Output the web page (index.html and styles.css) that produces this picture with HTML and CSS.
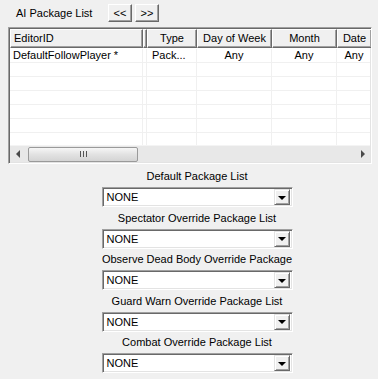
FILE: index.html
```html
<!DOCTYPE html>
<html>

<head>
    <meta charset="UTF-8">
    <title>AI Packages</title>
    <link rel="stylesheet" href="styles.css">
</head>

<body>

    <!-- =========== Package list =========== -->
    <div class="toolbar">
        <span class="caption">AI Package List</span>
        <button class="navButton">&lt;&lt;</button>
        <button class="navButton">&gt;&gt;</button>
    </div>

    <div class="listView">
        <div class="header">
            <div class="col colId">EditorID</div>
            <div class="col colGap"></div>
            <div class="col colType">Type</div>
            <div class="col colDay">Day of Week</div>
            <div class="col colMonth">Month</div>
            <div class="col colDate">Date</div>
        </div>

        <div class="rows">
            <div class="row">
                <div class="cell colId">DefaultFollowPlayer *</div>
                <div class="cell colGap"></div>
                <div class="cell colType left">Pack...</div>
                <div class="cell colDay">Any</div>
                <div class="cell colMonth">Any</div>
                <div class="cell colDate">Any</div>
            </div>
            <div class="row"><div class="cell colId"></div><div class="cell colGap"></div><div class="cell colType"></div><div class="cell colDay"></div><div class="cell colMonth"></div><div class="cell colDate"></div></div>
            <div class="row"><div class="cell colId"></div><div class="cell colGap"></div><div class="cell colType"></div><div class="cell colDay"></div><div class="cell colMonth"></div><div class="cell colDate"></div></div>
            <div class="row"><div class="cell colId"></div><div class="cell colGap"></div><div class="cell colType"></div><div class="cell colDay"></div><div class="cell colMonth"></div><div class="cell colDate"></div></div>
            <div class="row"><div class="cell colId"></div><div class="cell colGap"></div><div class="cell colType"></div><div class="cell colDay"></div><div class="cell colMonth"></div><div class="cell colDate"></div></div>
            <div class="row"><div class="cell colId"></div><div class="cell colGap"></div><div class="cell colType"></div><div class="cell colDay"></div><div class="cell colMonth"></div><div class="cell colDate"></div></div>
            <div class="row"><div class="cell colId"></div><div class="cell colGap"></div><div class="cell colType"></div><div class="cell colDay"></div><div class="cell colMonth"></div><div class="cell colDate"></div></div>
        </div>

        <!-- horizontal scrollbar -->
        <div class="hScroll">
            <span class="arrowLeft"></span>
            <div class="thumb"><span class="grip"></span></div>
            <span class="arrowRight"></span>
        </div>
    </div>

    <!-- =========== Override lists =========== -->
    <div class="packages">
        <div class="group">
            <span class="label">Default Package List</span>
            <div class="combo"><span class="value">NONE</span><span class="dropButton"></span></div>
        </div>
        <div class="group">
            <span class="label">Spectator Override Package List</span>
            <div class="combo"><span class="value">NONE</span><span class="dropButton"></span></div>
        </div>
        <div class="group">
            <span class="label">Observe Dead Body Override Package</span>
            <div class="combo"><span class="value">NONE</span><span class="dropButton"></span></div>
        </div>
        <div class="group">
            <span class="label">Guard Warn Override Package List</span>
            <div class="combo"><span class="value">NONE</span><span class="dropButton"></span></div>
        </div>
        <div class="group">
            <span class="label">Combat Override Package List</span>
            <div class="combo"><span class="value">NONE</span><span class="dropButton"></span></div>
        </div>
    </div>

</body>

</html>
```

FILE: styles.css
```css
* {
    margin: 0;
    padding: 0;
    box-sizing: border-box;
}

:root {
    --face: #f0f0f0;
    --white: #fff;
    --light: #e3e3e3;
    --shadow: #a0a0a0;
    --dark: #696969;
    --grid: #f0f0f0;
}

body {
    width: 378px;
    height: 379px;
    overflow: hidden;
    background: var(--face);
    font-family: "Liberation Sans", Arial, sans-serif;
    font-size: 11px;
    color: #000;
}

/* ---------- toolbar ---------- */

.toolbar {
    height: 27px;
    display: flex;
    align-items: center;
    padding: 0 0 2px 16px;
}

.caption {
    width: 92px;
}

.navButton {
    width: 24px;
    height: 18px;
    margin-right: 3px;
    font-family: inherit;
    font-size: 11px;
    line-height: 12px;
    background: var(--face);
    border: 1px solid;
    border-color: var(--white) var(--dark) var(--dark) var(--white);
    box-shadow: inset -1px -1px 0 var(--shadow);
}

/* ---------- list view ---------- */

.listView {
    margin-left: 8px;
    width: 364px;
    height: 137px;
    display: flex;
    flex-direction: column;
    background: var(--white);
    border: 1px solid;
    border-color: var(--shadow) var(--white) var(--white) var(--shadow);
    box-shadow: inset 1px 1px 0 var(--dark), inset -1px -1px 0 var(--light);
    padding: 1px;
    overflow: hidden;
}

.header,
.row {
    display: flex;
    flex-shrink: 0;
}

.header {
    height: 19px;
}

.col {
    height: 19px;
    line-height: 17px;
    text-align: center;
    background: var(--face);
    border: 1px solid;
    border-color: var(--white) var(--dark) var(--dark) var(--white);
    box-shadow: inset -1px -1px 0 var(--shadow);
    white-space: nowrap;
    overflow: hidden;
}

.col.colId {
    text-align: left;
    padding-left: 3px;
}

.colId { width: 133px; flex-shrink: 0; }
.colGap { width: 4px; flex-shrink: 0; }
.colType { width: 50px; flex-shrink: 0; }
.colDay { width: 75px; flex-shrink: 0; }
.colMonth { width: 65px; flex-shrink: 0; }
.colDate { width: 35px; flex-shrink: 0; }

.rows {
    flex: 1;
    overflow: hidden;
    padding-top: 1px;
}

.row {
    height: 14px;
}

.cell {
    height: 14px;
    line-height: 13px;
    text-align: center;
    border-right: 1px solid var(--grid);
    border-bottom: 1px solid var(--grid);
    white-space: nowrap;
    overflow: hidden;
}

.cell.colId {
    text-align: left;
    padding-left: 3px;
}

.cell.left {
    text-align: left;
    padding-left: 5px;
}

/* ---------- scrollbar ---------- */

.hScroll {
    height: 17px;
    flex-shrink: 0;
    display: flex;
    align-items: center;
    background: #e8e8e8;
    border-top: 1px solid #f4f4f4;
}

.arrowLeft,
.arrowRight {
    width: 0;
    height: 0;
    border-top: 4px solid transparent;
    border-bottom: 4px solid transparent;
}

.arrowLeft {
    margin-left: 6px;
    border-right: 4px solid #4a4a4a;
}

.arrowRight {
    margin-left: auto;
    margin-right: 5px;
    border-left: 4px solid #4a4a4a;
}

.thumb {
    margin-left: 8px;
    width: 110px;
    height: 15px;
    border: 1px solid #9a9a9a;
    border-radius: 2px;
    background: linear-gradient(#f6f6f6, #e2e2e2 50%, #d4d4d4);
    display: flex;
    justify-content: center;
    align-items: center;
}

.grip {
    width: 7px;
    height: 6px;
    background: repeating-linear-gradient(90deg, #555 0 1px, transparent 1px 3px);
}

/* ---------- combos ---------- */

.packages {
    display: flex;
    flex-direction: column;
    align-items: center;
    padding: 2px 0 0 16px;
}

.group {
    display: flex;
    flex-direction: column;
    align-items: center;
    height: 41.5px;
}

.label {
    height: 14px;
    line-height: 14px;
    margin: 3px 0 4px;
    white-space: nowrap;
}

.combo {
    width: 191px;
    height: 20px;
    display: flex;
    align-items: center;
    background: var(--white);
    border: 1px solid;
    border-color: var(--shadow) var(--white) var(--white) var(--shadow);
    box-shadow: inset 1px 1px 0 var(--dark), inset -1px -1px 0 var(--light);
    padding: 2px;
}

.value {
    flex: 1;
    padding-left: 2px;
}

.dropButton {
    width: 16px;
    height: 16px;
    background: var(--face);
    border: 1px solid;
    border-color: var(--light) var(--dark) var(--dark) var(--light);
    box-shadow: inset 1px 1px 0 var(--white), inset -1px -1px 0 var(--shadow);
    display: flex;
    justify-content: center;
    align-items: center;
}

.dropButton::after {
    content: '';
    border-left: 4px solid transparent;
    border-right: 4px solid transparent;
    border-top: 4px solid #000;
    margin-top: 1px;
}
```
